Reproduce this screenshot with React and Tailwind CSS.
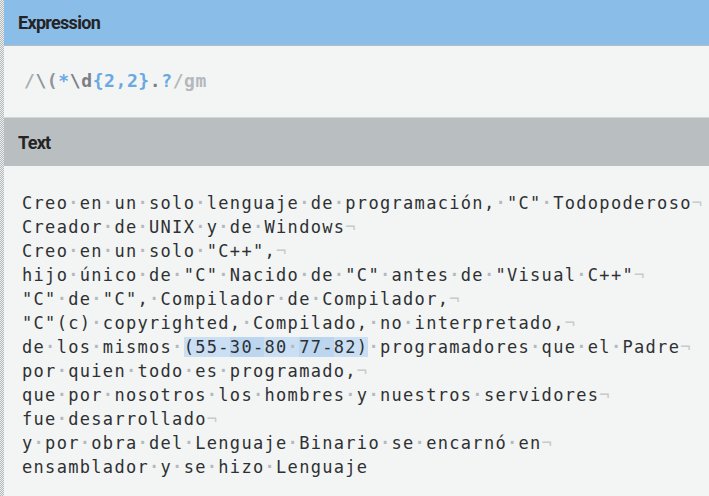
import React from 'react';

const lines = [
  'Creo en un solo lenguaje de programación, "C" Todopoderoso',
  'Creador de UNIX y de Windows',
  'Creo en un solo "C++",',
  'hijo único de "C" Nacido de "C" antes de "Visual C++"',
  '"C" de "C", Compilador de Compilador,',
  '"C"(c) copyrighted, Compilado, no interpretado,',
  'de los mismos (55-30-80 77-82) programadores que el Padre',
  'por quien todo es programado,',
  'que por nosotros los hombres y nuestros servidores',
  'fue desarrollado',
  'y por obra del Lenguaje Binario se encarnó en',
  'ensamblador y se hizo Lenguaje',
];

// matches of /\(*\d{2,2}.?/gm on the line that has them
const matches = ['(55-', '30-', '80 ', '77-', '82)'];

const Chars = ({ text }) =>
  text.split('').map((ch, i) =>
    ch === ' ' ? (
      <span key={i} className="text-[#b3babe] font-bold">·</span>
    ) : (
      <span key={i}>{ch}</span>
    )
  );

const Line = ({ text, last }) => {
  const eol = last ? null : <span className="text-[#c6cbce]">¬</span>;
  const start = text.indexOf('(55');
  if (start === -1) {
    return (
      <div>
        <Chars text={text} />
        {eol}
      </div>
    );
  }
  const before = text.slice(0, start);
  const after = text.slice(start + matches.join('').length);
  return (
    <div>
      <Chars text={before} />
      {matches.map((m, i) => (
        <span key={i} className={i % 2 === 0 ? 'bg-[#cadff3]' : 'bg-[#bcd6f0]'}>
          <Chars text={m} />
        </span>
      ))}
      <Chars text={after} />
      {eol}
    </div>
  );
};

const Strip = () => (
  <div className="w-[4px] shrink-0 bg-[repeating-conic-gradient(#b3b8bb_0%_25%,#eceeef_0%_50%)] bg-[length:2px_2px]" />
);

export default function App() {
  return (
    <div className="w-[709px] h-[496px] overflow-hidden bg-[#f3f4f4] flex font-['DejaVu_Sans_Mono',monospace]">
      <Strip />
      <div className="flex-1 flex flex-col min-w-0">
        <div className="h-[46px] shrink-0 bg-[#8bbde9] border-b border-[#b5bcc1] flex items-center pl-[14px]">
          <span className="font-['Roboto',sans-serif] font-bold text-[18px] text-[#242424] tracking-[-0.7px]">Expression</span>
        </div>
        <div className="h-[72px] shrink-0 border-b border-[#d2d6d8] pl-[20px] pt-[23px] text-[18px] leading-[24px] tracking-[0.6px] font-bold">
          <span className="text-[#a9afb2]">/</span>
          <span className="text-[#8e9498]">\(</span>
          <span className="text-[#6aa8e2]">*</span>
          <span className="text-[#7a8084]">\d</span>
          <span className="text-[#6aa8e2]">{'{2,2}'}</span>
          <span className="text-[#7a8084]">.</span>
          <span className="text-[#6aa8e2]">?</span>
          <span className="text-[#b3b9bc]">/gm</span>
        </div>
        <div className="h-[48px] shrink-0 bg-[#b9bec0] flex items-center pl-[14px]">
          <span className="font-['Roboto',sans-serif] font-bold text-[18px] text-[#242424] tracking-[-0.7px]">Text</span>
        </div>
        <div className="pl-[18px] pt-[25px] text-[17px] leading-[24px] tracking-[1.3px] text-[#2e3133] whitespace-pre">
          {lines.map((l, i) => (
            <Line key={i} text={l} last={i === lines.length - 1} />
          ))}
        </div>
      </div>
    </div>
  );
}
